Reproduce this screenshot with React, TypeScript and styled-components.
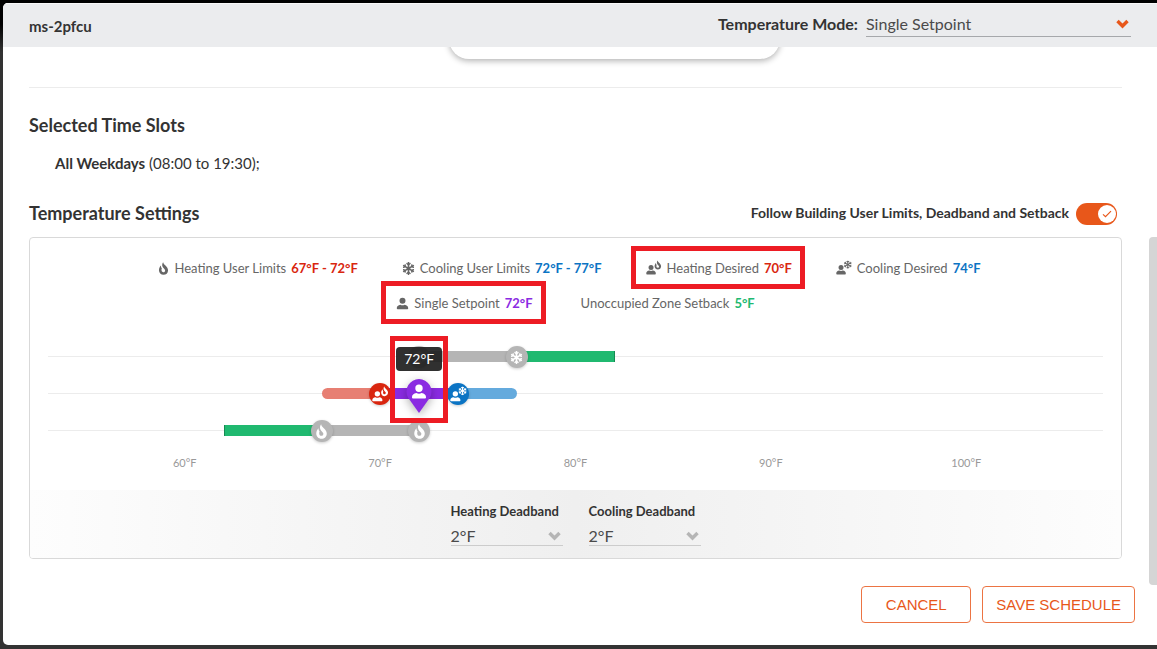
import React, { useState } from "react";
import styled, { createGlobalStyle, css } from "styled-components";
import { FaSnowflake } from "react-icons/fa";

const SCALE_MIN = 53;
const SCALE_MAX = 107;
const toPercent = (t: number) => `${((t - SCALE_MIN) / (SCALE_MAX - SCALE_MIN)) * 100}%`;
const spanPercent = (a: number, b: number) => `${((b - a) / (SCALE_MAX - SCALE_MIN)) * 100}%`;

const color = {
  accent: "#e8571a",
  red: "#d9260f",
  blue: "#0b74c4",
  purple: "#8a2be2",
  green: "#20b970",
  grey: "#b5b5b5",
  text: "#333333",
  muted: "#666666",
  mark: "#ed1c24",
};

const GlobalStyle = createGlobalStyle`
  *, *::before, *::after { box-sizing: border-box; }
  body {
    margin: 0;
    background: linear-gradient(#000 0, #000 24px, #333 52px);
    font-family: Lato, "Liberation Sans", sans-serif;
    color: ${color.text};
  }
`;

const Page = styled.div`
  min-height: 100vh;
  padding: 3px 0 4px 3px;
  display: flex;
`;

const Modal = styled.main`
  position: relative;
  flex: 1;
  min-width: 0;
  background: #fff;
  border-radius: 5px 0 0 5px;
  overflow: hidden;
`;

const Header = styled.header`
  height: 44px;
  padding: 0 26px;
  display: flex;
  align-items: center;
  justify-content: space-between;
  background: #ebecee;
  border-top: 1px solid #f8f8f8;
`;

const ZoneName = styled.h1`
  margin: 0;
  font-size: 15px;
  line-height: 20px;
  font-weight: 700;
`;

const ModeField = styled.label`
  display: flex;
  align-items: flex-start;
  gap: 8px;
  font-size: 16px;
  line-height: 22px;
  font-weight: 700;
  padding-bottom: 2px;
`;

const SelectBox = styled.span<{ $width: number; $tone: string; $line: string; $drop?: number }>`
  display: flex;
  align-items: center;
  width: ${(p) => p.$width}px;
  height: 24px;
  padding-top: ${(p) => p.$drop ?? 0}px;
  border-bottom: 1px solid ${(p) => p.$line};

  select {
    flex: 1;
    min-width: 0;
    padding: 0;
    border: 0;
    background: none;
    appearance: none;
    font: 400 16px/20px Lato, sans-serif;
    color: #4a4a4a;
  }
  svg {
    flex: none;
    margin-right: 2px;
    color: ${(p) => p.$tone};
  }
`;

const Body = styled.div`
  padding: 0 35px 22px 26px;
`;

const CardClip = styled.div`
  height: 40px;
  overflow: hidden;
`;

const ScrolledCard = styled.div`
  width: 331px;
  height: 60px;
  margin: -48px 0 0 420px;
  border-radius: 20px;
  background: #fff;
  box-shadow: 0 2px 6px rgba(0, 0, 0, 0.3);
`;

const Divider = styled.hr`
  margin: 0;
  border: 0;
  border-top: 1px solid #ececec;
`;

const Title = styled.h2`
  margin: 0;
  font-size: 18px;
  line-height: 24px;
  font-weight: 700;
`;

const SlotSection = styled.section`
  padding: 25px 0 28px;
`;

const SlotLine = styled.p`
  margin: 16px 0 0 26px;
  font-size: 15px;
  line-height: 20px;
`;

const SettingsHead = styled.div`
  display: flex;
  justify-content: space-between;
  align-items: center;
  height: 24px;
  margin-bottom: 12px;
  padding-right: 5px;
`;

const Follow = styled.label`
  display: flex;
  align-items: center;
  gap: 7px;
  font-size: 14px;
  line-height: 20px;
  font-weight: 700;
`;

const ToggleTrack = styled.span`
  position: relative;
  display: block;
  width: 41px;
  height: 22px;
  margin-top: 2px;

  input {
    display: block;
    width: 41px;
    height: 22px;
    margin: 0;
    appearance: none;
    border-radius: 11px;
    background: #bbb;
  }
  input:checked {
    background: ${color.accent};
  }
`;

const Knob = styled.span<{ $on: boolean }>`
  position: absolute;
  top: 2px;
  ${(p) => (p.$on ? "right: 1px;" : "left: 1px;")}
  width: 18px;
  height: 18px;
  border-radius: 50%;
  background: #fff;
  display: grid;
  place-items: center;
  color: ${color.accent};
  pointer-events: none;
`;

const Panel = styled.section`
  border: 1px solid #d9d9d9;
  border-radius: 4px;
  overflow: hidden;
`;

const Legend = styled.div`
  padding-top: 20px;
`;

const LegendRow = styled.div<{ $gap: number; $shift?: number }>`
  display: flex;
  justify-content: center;
  gap: ${(p) => p.$gap}px;
  padding-right: ${(p) => p.$shift ?? 0}px;
  height: 35px;
`;

const LegendItem = styled.div<{ $marked?: boolean }>`
  position: relative;
  display: flex;
  align-items: center;
  height: 20px;
  font-size: 13px;
  line-height: 20px;
  color: ${color.muted};
  white-space: nowrap;

  > svg {
    margin-right: 5px;
  }
  ${(p) =>
    p.$marked &&
    css`
      &::after {
        content: "";
        position: absolute;
        inset: -12px -13px -11px -15px;
        border: 5px solid ${color.mark};
      }
    `}
`;

const Value = styled.strong<{ $tone: string }>`
  margin-left: 5px;
  color: ${(p) => p.$tone};
`;

const Chart = styled.div`
  position: relative;
  margin: 10px 18px 0;
`;

const Track = styled.div`
  position: relative;
  height: 37px;

  &::before {
    content: "";
    position: absolute;
    left: 0;
    right: 0;
    top: 18px;
    border-top: 1px solid #ececec;
  }
`;

const Segment = styled.span<{ $tone: string; $round?: "left" | "right"; $cap?: "left" | "right" }>`
  position: absolute;
  top: 13px;
  height: 11px;
  background: ${(p) => p.$tone};
  ${(p) => p.$round === "left" && "border-radius: 6px 0 0 6px;"}
  ${(p) => p.$round === "right" && "border-radius: 0 6px 6px 0;"}
  ${(p) => p.$cap && `border-${p.$cap}: 1px solid #178a53;`}
`;

const Handle = styled.span<{ $tone: string }>`
  position: absolute;
  top: 8px;
  width: 22px;
  height: 22px;
  margin-left: -11px;
  border-radius: 50%;
  display: grid;
  place-items: center;
  background: ${(p) => p.$tone};
  color: #fff;
  box-shadow: 0 1px 3px rgba(0, 0, 0, 0.2);
`;

const PinHandle = styled.span`
  position: absolute;
  top: 4px;
  width: 26px;
  height: 36px;
  margin-left: -13px;
  filter: drop-shadow(0 3px 5px rgba(0, 0, 0, 0.3));
  z-index: 2;

  svg {
    display: block;
  }
`;

const Tooltip = styled.span`
  position: absolute;
  top: -28px;
  width: 46px;
  height: 24px;
  margin-left: -23px;
  border-radius: 4px;
  background: rgba(30, 30, 30, 0.92);
  color: #fff;
  font-size: 14px;
  line-height: 23px;
  text-align: center;
  z-index: 2;
`;

const PinMark = styled.span`
  position: absolute;
  top: -39px;
  width: 58px;
  height: 87px;
  margin-left: -29px;
  border: 5px solid ${color.mark};
  z-index: 3;
`;

const HiddenRange = styled.input`
  position: absolute;
  inset: 8px 0 auto;
  width: 100%;
  height: 22px;
  margin: 0;
  opacity: 0;
`;

const Axis = styled.div`
  position: relative;
  height: 41px;

  span {
    position: absolute;
    top: 6px;
    width: 40px;
    margin-left: -20px;
    font-size: 11px;
    line-height: 16px;
    text-align: center;
    color: #999;
  }
`;

const DeadbandBar = styled.div`
  display: flex;
  justify-content: center;
  gap: 26px;
  height: 68px;
  padding-top: 12px;
  background: linear-gradient(90deg, #fdfdfd, #efefef 50%, #fdfdfd);
`;

const Deadband = styled.label`
  display: flex;
  flex-direction: column;
  gap: 2px;
  font-size: 13px;
  line-height: 18px;
  font-weight: 700;
`;

const Actions = styled.footer`
  display: flex;
  justify-content: flex-end;
  gap: 11px;
  margin: 27px -13px 0 0;
`;

const ActionButton = styled.button`
  height: 37px;
  padding: 0 13px;
  min-width: 110px;
  border: 1px solid #ec7443;
  border-radius: 4px;
  background: #fff;
  color: ${color.accent};
  font: 400 15px/20px "Liberation Sans", Arial, sans-serif;
`;

const ScrollThumb = styled.div`
  position: absolute;
  top: 234px;
  right: 0;
  width: 8px;
  height: 348px;
  border-radius: 4px 0 0 4px;
  background: #d5d5d5;
`;

const flamePath =
  "M7.6 0.2 C8 3.6 13.6 5.4 13.6 10 C13.6 13.4 11.2 15.8 8 15.8 C4.8 15.8 2.4 13.4 2.4 10.2 C2.4 7.6 3.6 5.6 4.8 4.4 C4.8 6 5.2 7 6 7.8 C5.6 8.6 5.4 9.4 5.6 10.6 C5.8 12 6.8 12.6 7.8 12.6 C9.2 12.6 10 11.6 10 10.4 C10 8.6 7.4 7.8 6.6 5.2 C6.1 3.2 6.6 1.4 7.6 0.2 Z";

const Flame = ({ size }: { size: number }) => (
  <svg width={size} height={size} viewBox="0 0 16 16" fill="currentColor" aria-hidden="true">
    <path d={flamePath} />
  </svg>
);

const personPath =
  "M8 1 a3.7 3.7 0 0 1 0 7.4 a3.7 3.7 0 0 1 0 -7.4 Z M5.4 9.4 Q8 10.8 10.6 9.4 C13.4 9.8 15 11.4 15 13.4 V14 Q15 15 14 15 H2 Q1 15 1 14 V13.4 C1 11.4 2.6 9.8 5.4 9.4 Z";

const Person = ({ size }: { size: number }) => (
  <svg width={size} height={size} viewBox="0 0 16 16" fill="currentColor" aria-hidden="true">
    <path d={personPath} />
  </svg>
);

const PersonWith = ({ kind, size }: { kind: "flame" | "snow"; size: number }) => (
  <svg width={size} height={size} viewBox="0 0 16 16" fill="currentColor" aria-hidden="true">
    <path d={personPath} transform="translate(-0.4 4.2) scale(0.68)" />
    {kind === "snow" ? (
      <FaSnowflake x={7.6} y={0.4} size={8.4} />
    ) : (
      <path d={flamePath} transform="translate(7.2 0.4) scale(0.58)" />
    )}
  </svg>
);

const Chevron = () => (
  <svg width="13" height="10" viewBox="0 0 13 10" aria-hidden="true">
    <path d="M1.5 2 L6.5 7 L11.5 2" fill="none" stroke="currentColor" strokeWidth="3.4" />
  </svg>
);

const CheckMark = () => (
  <svg width="10" height="8" viewBox="0 0 10 8" aria-hidden="true">
    <path d="M1 4.4 L3.5 6.7 L9 1.2" fill="none" stroke="currentColor" strokeWidth="1.2" />
  </svg>
);

const Pin = () => (
  <svg width="26" height="36" viewBox="0 0 26 36" aria-hidden="true">
    <path d="M13 0 a12.5 12.5 0 0 1 11 18.4 L13 34 L2 18.4 A12.5 12.5 0 0 1 13 0 Z" fill={color.purple} />
    <g transform="translate(5 4.6)" fill="#fff">
      <path d={personPath} />
    </g>
  </svg>
);

const axisTemps = [60, 70, 80, 90, 100];
const deadbandChoices = [1, 2, 3, 4, 5];

const DeadbandSelect = ({ label }: { label: string }) => (
  <Deadband>
    {label}
    <SelectBox $width={112} $tone="#b5b5b5" $line="#cccccc" $drop={4}>
      <select defaultValue="2">
        {deadbandChoices.map((n) => (
          <option key={n} value={n}>{`${n}°F`}</option>
        ))}
      </select>
      <Chevron />
    </SelectBox>
  </Deadband>
);

export default function App() {
  const [follow, setFollow] = useState(true);
  const [setpoint, setSetpoint] = useState(72);

  return (
    <>
      <GlobalStyle />
      <Page>
        <Modal>
          <Header>
            <ZoneName>ms-2pfcu</ZoneName>
            <ModeField>
              Temperature Mode:
              <SelectBox $width={265} $tone={color.accent} $line="#a6a8ab">
                <select defaultValue="single">
                  <option value="single">Single Setpoint</option>
                  <option value="dual">Dual Setpoint</option>
                </select>
                <Chevron />
              </SelectBox>
            </ModeField>
          </Header>
          <Body>
            <CardClip>
              <ScrolledCard />
            </CardClip>
            <Divider />
            <SlotSection>
              <Title>Selected Time Slots</Title>
              <SlotLine>
                <strong>All Weekdays</strong> (08:00 to 19:30);
              </SlotLine>
            </SlotSection>
            <SettingsHead>
              <Title>Temperature Settings</Title>
              <Follow>
                Follow Building User Limits, Deadband and Setback
                <ToggleTrack>
                  <input type="checkbox" checked={follow} onChange={(e) => setFollow(e.target.checked)} />
                  <Knob $on={follow}>
                    <CheckMark />
                  </Knob>
                </ToggleTrack>
              </Follow>
            </SettingsHead>
            <Panel>
              <Legend>
                <LegendRow $gap={44} $shift={14}>
                  <LegendItem>
                    <Flame size={13} />
                    Heating User Limits<Value $tone={color.red}>67°F - 72°F</Value>
                  </LegendItem>
                  <LegendItem>
                    <FaSnowflake size={13} />
                    Cooling User Limits<Value $tone={color.blue}>72°F - 77°F</Value>
                  </LegendItem>
                  <LegendItem $marked>
                    <PersonWith kind="flame" size={16} />
                    Heating Desired<Value $tone={color.red}>70°F</Value>
                  </LegendItem>
                  <LegendItem>
                    <PersonWith kind="snow" size={16} />
                    Cooling Desired<Value $tone={color.blue}>74°F</Value>
                  </LegendItem>
                </LegendRow>
                <LegendRow $gap={48}>
                  <LegendItem $marked>
                    <Person size={13} />
                    Single Setpoint<Value $tone={color.purple}>{setpoint}°F</Value>
                  </LegendItem>
                  <LegendItem>
                    Unoccupied Zone Setback<Value $tone={color.green}>5°F</Value>
                  </LegendItem>
                </LegendRow>
              </Legend>
              <Chart>
                <Track>
                  <Segment $tone={color.grey} style={{ left: toPercent(72), width: spanPercent(72, 77) }} />
                  <Segment $tone={color.green} $cap="right" style={{ left: toPercent(77), width: spanPercent(77, 82) }} />
                  <Handle $tone={color.grey} style={{ left: toPercent(72) }}>
                    <FaSnowflake size={13} />
                  </Handle>
                  <Handle $tone={color.grey} style={{ left: toPercent(77) }}>
                    <FaSnowflake size={13} />
                  </Handle>
                </Track>
                <Track>
                  <Segment $tone="#e77f73" $round="left" style={{ left: toPercent(67), width: spanPercent(67, 70) }} />
                  <Segment $tone={color.purple} style={{ left: toPercent(70), width: spanPercent(70, 74) }} />
                  <Segment $tone="#64aadd" $round="right" style={{ left: toPercent(74), width: spanPercent(74, 77) }} />
                  <Handle $tone={color.red} style={{ left: toPercent(70) }}>
                    <PersonWith kind="flame" size={17} />
                  </Handle>
                  <Handle $tone={color.blue} style={{ left: toPercent(74) }}>
                    <PersonWith kind="snow" size={17} />
                  </Handle>
                  <PinHandle style={{ left: toPercent(setpoint) }}>
                    <Pin />
                  </PinHandle>
                  <Tooltip style={{ left: toPercent(setpoint) }}>{setpoint}°F</Tooltip>
                  <PinMark style={{ left: toPercent(setpoint) }} />
                  <HiddenRange
                    type="range"
                    aria-label="Single Setpoint"
                    min={SCALE_MIN}
                    max={SCALE_MAX}
                    value={setpoint}
                    onChange={(e) => setSetpoint(Number(e.target.value))}
                  />
                </Track>
                <Track>
                  <Segment $tone={color.green} $cap="left" style={{ left: toPercent(62), width: spanPercent(62, 67) }} />
                  <Segment $tone={color.grey} style={{ left: toPercent(67), width: spanPercent(67, 72) }} />
                  <Handle $tone={color.grey} style={{ left: toPercent(67) }}>
                    <Flame size={15} />
                  </Handle>
                  <Handle $tone={color.grey} style={{ left: toPercent(72) }}>
                    <Flame size={15} />
                  </Handle>
                </Track>
                <Axis>
                  {axisTemps.map((t) => (
                    <span key={t} style={{ left: toPercent(t) }}>{`${t}°F`}</span>
                  ))}
                </Axis>
              </Chart>
              <DeadbandBar>
                <DeadbandSelect label="Heating Deadband" />
                <DeadbandSelect label="Cooling Deadband" />
              </DeadbandBar>
            </Panel>
            <Actions>
              <ActionButton type="button">CANCEL</ActionButton>
              <ActionButton type="button">SAVE SCHEDULE</ActionButton>
            </Actions>
          </Body>
          <ScrollThumb />
        </Modal>
      </Page>
    </>
  );
}
